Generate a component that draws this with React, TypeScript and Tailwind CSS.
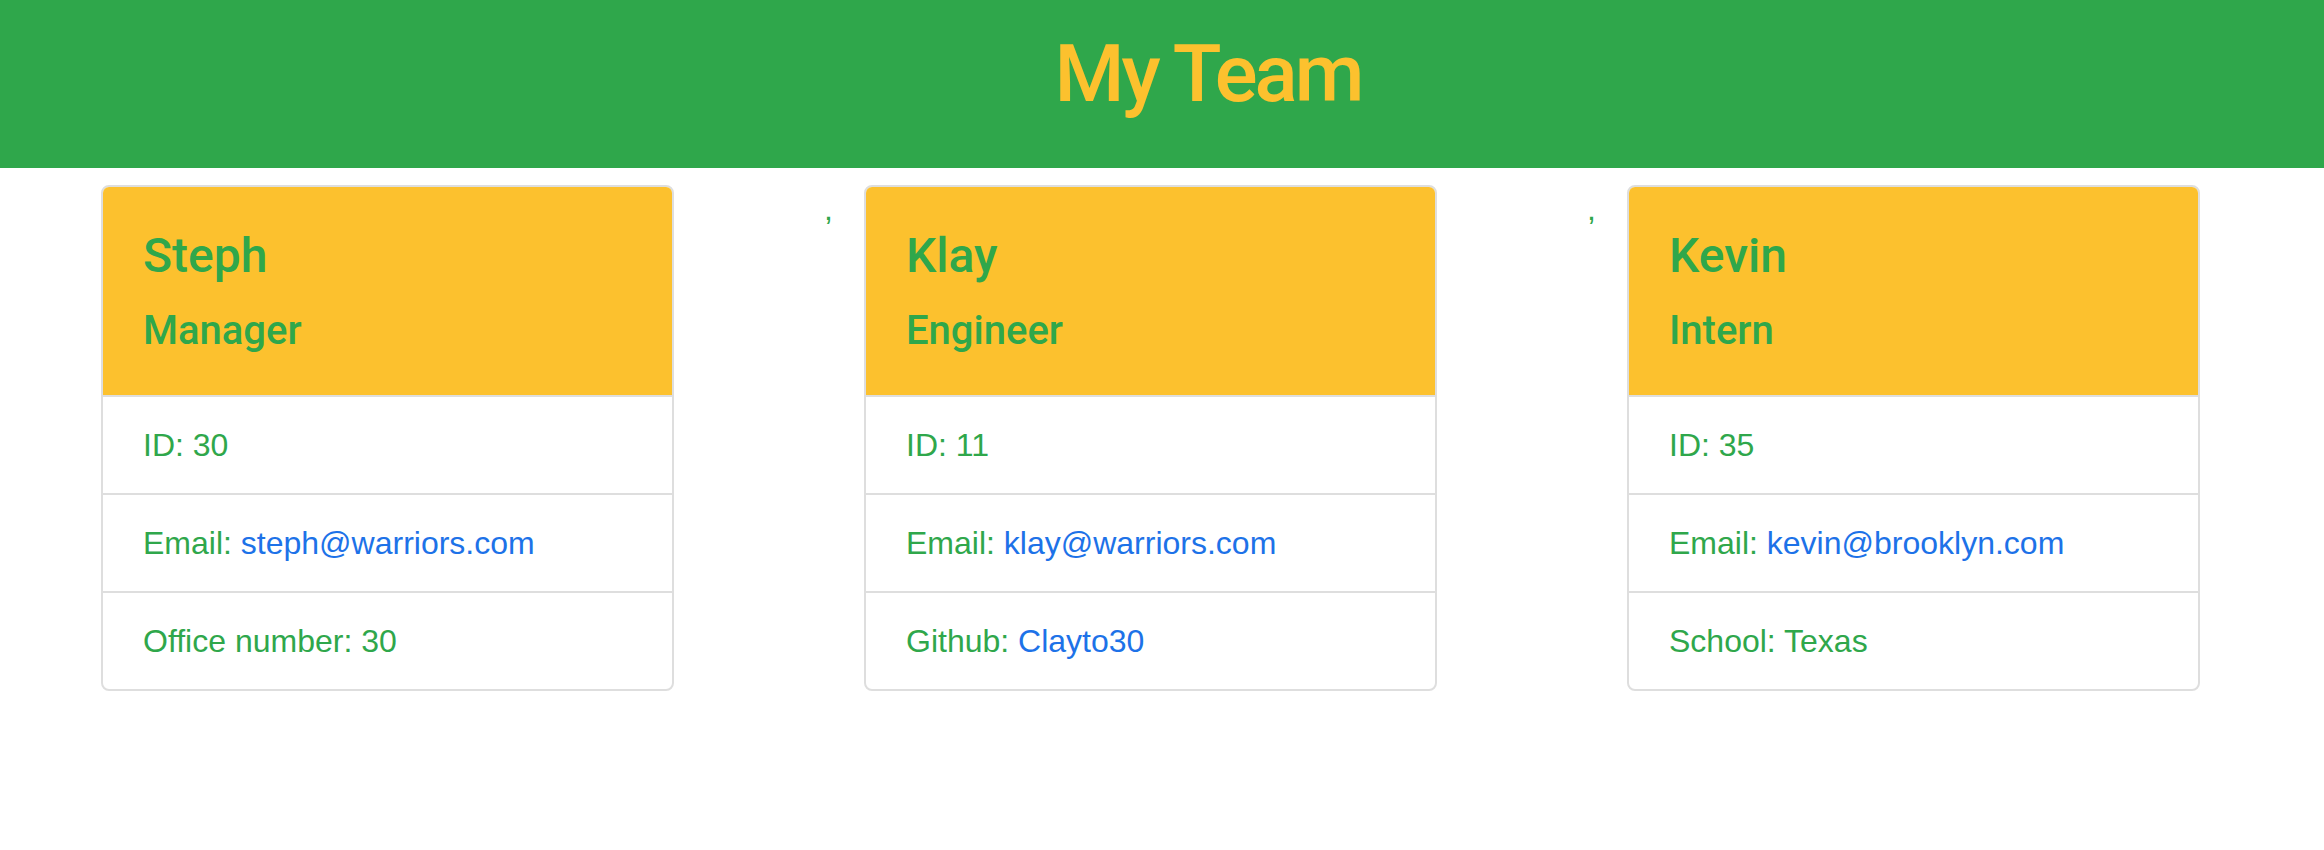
import React from "react";

type Member = {
  name: string;
  role: string;
  id: string;
  email: string;
  extraLabel: string;
  extraValue: string;
  extraLink: boolean;
};

const members: Member[] = [
  { name: "Steph", role: "Manager", id: "30", email: "steph@warriors.com", extraLabel: "Office number", extraValue: "30", extraLink: false },
  { name: "Klay", role: "Engineer", id: "11", email: "klay@warriors.com", extraLabel: "Github", extraValue: "Clayto30", extraLink: true },
  { name: "Kevin", role: "Intern", id: "35", email: "kevin@brooklyn.com", extraLabel: "School", extraValue: "Texas", extraLink: false },
];

function Card({ m }: { m: Member }) {
  return (
    <div className="w-[573px] shrink-0 border-2 border-[#dedede] rounded-[8px] overflow-hidden bg-white">
      <div className="bg-[#fcc12e] px-[40px] pt-[40px] pb-[40px]">
        <h4 className="text-[48px] leading-[57.6px] font-medium text-[#2fa74b] mb-[22px] font-['Roboto',sans-serif]">{m.name}</h4>
        <h5 className="text-[40px] leading-[48px] font-medium text-[#2fa74b] font-['Roboto',sans-serif]">{m.role}</h5>
      </div>
      <div className="border-t-2 border-[#dedede] px-[40px] py-[24px] text-[32px] leading-[48px]">ID: {m.id}</div>
      <div className="border-t-2 border-[#dedede] px-[40px] py-[24px] text-[32px] leading-[48px]">
        Email: <a className="text-[#1d72e8]">{m.email}</a>
      </div>
      <div className="border-t-2 border-[#dedede] px-[40px] py-[24px] text-[32px] leading-[48px]">
        {m.extraLabel}: {m.extraLink ? <a className="text-[#1d72e8]">{m.extraValue}</a> : m.extraValue}
      </div>
    </div>
  );
}

export default function App() {
  return (
    <div className="w-[2324px] h-[850px] bg-white text-[#2fa74b] font-['Liberation_Sans',Arial,sans-serif] overflow-hidden">
      <header className="bg-[#2fa74b] h-[168px] pt-[26px] flex justify-center pl-[92px]">
        <h1 className="text-[80px] leading-[96px] font-medium text-[#fcc12e] tracking-[-3px] font-['Roboto',sans-serif]">My Team</h1>
      </header>
      <div className="flex items-start pl-[101px] mt-[17px]">
        {members.map((m, i) => (
          <React.Fragment key={m.name}>
            {i > 0 && <span className="text-[32px] leading-[48px] ml-[150px] mr-[31px] w-[9px]">,</span>}
            <Card m={m} />
          </React.Fragment>
        ))}
      </div>
    </div>
  );
}
